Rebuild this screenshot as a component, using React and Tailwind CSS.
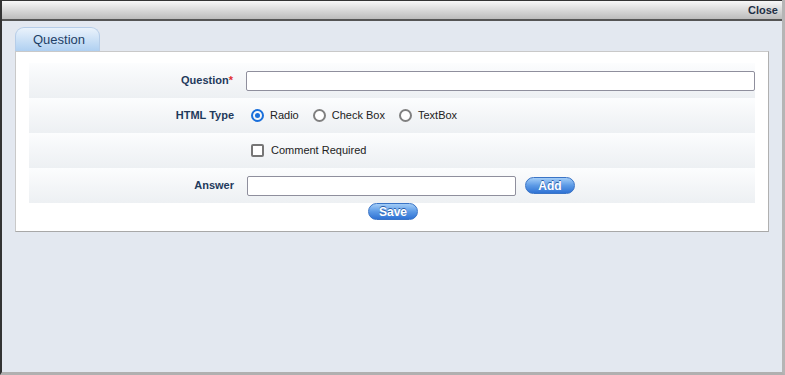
import React from "react";

const Radio = ({ checked, label }) => (
  <label className="flex items-center gap-[6px]">
    {checked ? (
      <span className="w-[13px] h-[13px] rounded-full border-2 border-[#1a6fdb] flex items-center justify-center">
        <span className="w-[5px] h-[5px] rounded-full bg-[#1a6fdb]" />
      </span>
    ) : (
      <span className="w-[13px] h-[13px] rounded-full border-2 border-[#808080] bg-white" />
    )}
    <span>{label}</span>
  </label>
);

const PillButton = ({ children }) => (
  <button className="h-[17px] w-[50px] rounded-full border border-[#3a74c6] bg-gradient-to-b from-[#a3cdf7] via-[#5c9ae6] to-[#2f72d4] text-white text-[12px] font-bold leading-none [text-shadow:0_-1px_0_#2a5da8]">
    {children}
  </button>
);

const Row = ({ label, children }) => (
  <div className="flex items-center h-[35px] bg-gradient-to-b from-[#fcfdfe] via-[#f4f6f8] to-[#edf0f3]">
    <div className="w-[205px] text-right text-[11px] font-bold text-[#1f3a5c]">{label}</div>
    <div className="flex-1 flex items-center pl-[13px]">{children}</div>
  </div>
);

export default function App() {
  return (
    <div className="w-[785px] h-[375px] flex flex-col bg-[#e3e8f0] border-l-2 border-l-[#333] border-r-[3px] border-r-[#b5b5b5] border-b-[3px] border-b-[#b0b0b0] font-['Liberation_Sans',Arial,sans-serif] text-[11px] text-[#222]">
      {/* title bar */}
      <div className="h-[21px] flex items-center justify-end pr-[4px] bg-gradient-to-b from-[#f7f7f7] to-[#bcbcbc] border-t border-t-[#333] border-b-2 border-b-[#555]">
        <span className="text-[11px] font-bold text-[#1e2f45]">Close</span>
      </div>

      <div className="px-[13px] pt-[6px]">
        {/* tab */}
        <div className="w-[85px] h-[24px] rounded-t-[9px] border border-b-0 border-[#b6cde8] bg-gradient-to-b from-[#eaf2fb] to-[#afd0f1] flex items-center pl-[17px] text-[13px] text-[#1e3f66]">
          Question
        </div>

        {/* panel */}
        <div className="w-[754px] bg-white border border-[#c9c9c9] border-r-[#b0b0b0] border-b-[#a8a8a8] px-[13px] pt-[11px] pb-[11px]">
          <Row label={<>Question<span className="text-[#e03030]">*</span></>}>
            <input className="w-[509px] h-[20px] border border-[#8f8f9d] rounded-[2px] bg-white" />
          </Row>
          <Row label="HTML Type">
            <div className="flex items-center gap-[14px] pl-[4px] text-[11px]">
              <Radio checked label="Radio" />
              <Radio label="Check Box" />
              <Radio label="TextBox" />
            </div>
          </Row>
          <Row label="">
            <label className="flex items-center gap-[7px] pl-[4px]">
              <span className="w-[13px] h-[13px] border-2 border-[#767676] rounded-[2px] bg-white" />
              <span>Comment Required</span>
            </label>
          </Row>
          <Row label="Answer">
            <input className="w-[269px] h-[20px] border border-[#8f8f9d] rounded-[2px] bg-white" />
            <div className="ml-[9px] flex items-center">
              <PillButton>Add</PillButton>
            </div>
          </Row>
          <div className="flex justify-center pl-[2px]">
            <PillButton>Save</PillButton>
          </div>
        </div>
      </div>
    </div>
  );
}
